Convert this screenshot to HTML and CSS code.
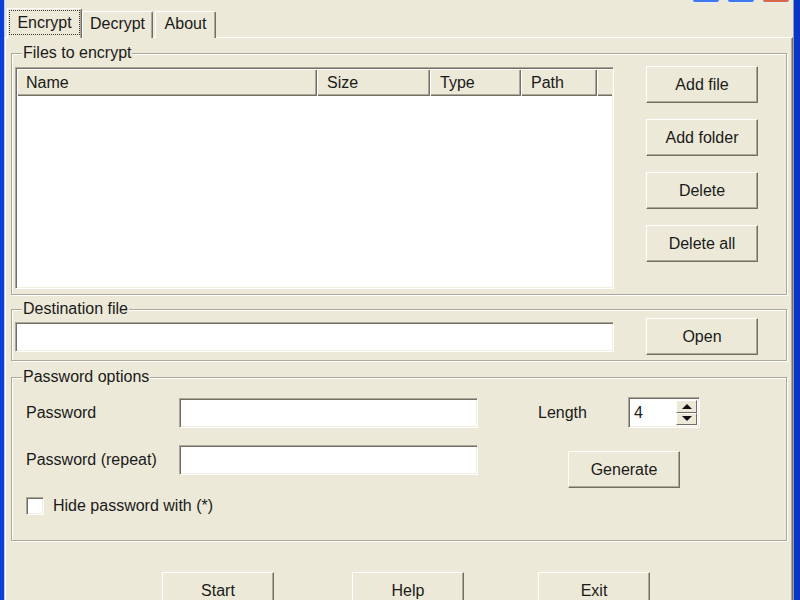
FILE: index.html
```html
<!DOCTYPE html>
<html>
<head>
<meta charset="utf-8">
<link rel="stylesheet" href="styles.css">
</head>
<body>
<div class="window">
  <div class="caption">
    <span class="cb"></span><span class="cb"></span><span class="cb close"></span>
  </div>
  <div class="tabs">
    <div class="tab active"><span>Encrypt</span></div>
    <div class="tab tab-decrypt"><span>Decrypt</span></div>
    <div class="tab tab-about"><span>About</span></div>
  </div>
  <div class="panel">
    <fieldset class="group group-files">
      <legend>Files to encrypt</legend>
      <div class="files-row">
        <div class="listview">
          <div class="lv-header">
            <div class="hcell col-name">Name</div>
            <div class="hcell col-size">Size</div>
            <div class="hcell col-type">Type</div>
            <div class="hcell col-path">Path</div>
            <div class="hcell col-fill"></div>
          </div>
        </div>
        <div class="btncol">
          <button class="btn">Add file</button>
          <button class="btn">Add folder</button>
          <button class="btn">Delete</button>
          <button class="btn">Delete all</button>
        </div>
      </div>
    </fieldset>

    <fieldset class="group group-dest">
      <legend>Destination file</legend>
      <div class="dest-row">
        <div class="input dest-input"></div>
        <button class="btn open-btn">Open</button>
      </div>
    </fieldset>

    <fieldset class="group group-pw">
      <legend>Password options</legend>
      <div class="pw-body">
        <div class="pw-left">
          <div class="field field-first">
            <span class="label">Password</span>
            <div class="input pw-input"></div>
          </div>
          <div class="field field-second">
            <span class="label">Password (repeat)</span>
            <div class="input pw-input"></div>
          </div>
          <div class="check-row">
            <span class="checkbox"></span>
            <span class="check-label">Hide password with (*)</span>
          </div>
        </div>
        <div class="pw-right">
          <div class="length-row">
            <span class="label">Length</span>
            <div class="spinner">
              <span class="spin-value">4</span>
              <div class="spin-btns">
                <span class="spin-up"></span>
                <span class="spin-down"></span>
              </div>
            </div>
          </div>
          <button class="btn generate">Generate</button>
        </div>
      </div>
    </fieldset>

    <div class="bottom-row">
      <button class="btn">Start</button>
      <button class="btn btn-help">Help</button>
      <button class="btn btn-exit">Exit</button>
    </div>
  </div>
</div>
</body>
</html>
```

FILE: styles.css
```css
html, body {
  margin: 0;
  padding: 0;
}
body {
  width: 800px;
  height: 600px;
  overflow: hidden;
  background: #ece9d8;
  font-family: "Liberation Sans", Arial, sans-serif;
  font-size: 16px;
  color: #1a1a1a;
}
.window {
  box-sizing: border-box;
  width: 800px;
  height: 600px;
  overflow: hidden;
  display: flex;
  flex-direction: column;
  background: #ece9d8;
  border-left: 4px solid #0b3fd6;
  border-right: 6px solid #0a36c8;
  box-shadow: inset 1px 0 0 #b9cdf4, inset -1px 0 0 #8f9bb8;
}
.caption {
  height: 3px;
  display: flex;
  justify-content: flex-end;
  gap: 7px;
  padding-right: 4px;
  flex: none;
}
.cb {
  box-sizing: border-box;
  width: 28px;
  height: 3px;
  background: #3f78ee;
  border: 1px solid #e6eefc;
  border-top: none;
  border-radius: 0 0 3px 3px;
}
.cb.close {
  background: #d8674a;
}
.tabs {
  flex: none;
  display: flex;
  align-items: flex-end;
  height: 30px;
  margin-top: 5px;
  padding-left: 3px;
  position: relative;
  z-index: 2;
}
.tab {
  box-sizing: border-box;
  height: 27px;
  display: flex;
  align-items: center;
  justify-content: center;
  border-top: 1px solid #ffffff;
  border-left: 1px solid #ffffff;
  border-right: 1px solid #716f64;
  box-shadow: inset -1px 0 0 #aca899;
  border-radius: 2px 2px 0 0;
  background: #ece9d8;
  padding-bottom: 2px;
}
.tab.active {
  width: 75px;
  height: 30px;
  padding-bottom: 3px;
}
.tab.active span {
  box-sizing: border-box;
  width: 71px;
  height: 25px;
  display: flex;
  align-items: center;
  justify-content: center;
  outline: 1px dotted #333;
  outline-offset: -1px;
  margin-top: 1px;
}
.tab-decrypt {
  width: 71px;
}
.tab-about {
  width: 61px;
  margin-left: 2px;
}
.panel {
  flex: none;
  box-sizing: border-box;
  height: 620px;
  margin: -1px 1px 0 1px;
  border-top: 1px solid #ffffff;
  border-left: 1px solid #ffffff;
  border-right: 1px solid #716f64;
  box-shadow: inset -1px 0 0 #aca899;
  position: relative;
  z-index: 1;
  display: flex;
  flex-direction: column;
}
.group {
  margin: 0 5px;
  padding: 0;
  min-width: 0;
  border: 1px solid #aca899;
  box-shadow: inset 1px 1px 0 #ffffff, 1px 1px 0 #ffffff;
}
.group legend {
  margin-left: 10px;
  padding: 0 1px;
  line-height: 18px;
  background: #ece9d8;
}
.group-files {
  margin-top: 6px;
}
.files-row {
  display: flex;
  align-items: flex-start;
  padding: 0 0 5px 3px;
}
.listview {
  box-sizing: border-box;
  width: 599px;
  height: 222px;
  margin-top: 5px;
  background: #ffffff;
  border-top: 1px solid #aca899;
  border-left: 1px solid #aca899;
  border-right: 1px solid #ffffff;
  border-bottom: 1px solid #ffffff;
  box-shadow: inset 1px 1px 0 #716f64, inset -1px -1px 0 #f1efe2;
  padding: 1px;
}
.lv-header {
  display: flex;
  height: 27px;
}
.hcell {
  box-sizing: border-box;
  height: 27px;
  background: #ece9d8;
  padding-left: 10px;
  display: flex;
  align-items: center;
  box-shadow: inset 1px 1px 0 #ffffff, inset -1px -1px 0 #716f64, inset -2px -2px 0 #aca899;
}
.col-name { width: 300px; padding-left: 9px; }
.col-size { width: 113px; }
.col-type { width: 91px; }
.col-path { width: 76px; }
.col-fill { flex: 1; box-shadow: inset 1px 1px 0 #ffffff, inset 0 -1px 0 #716f64, inset 0 -2px 0 #aca899; }

.btn {
  box-sizing: border-box;
  font-family: inherit;
  font-size: 16px;
  color: #1a1a1a;
  width: 112px;
  height: 37px;
  padding: 0;
  background: #ece9d8;
  border-top: 1px solid #ffffff;
  border-left: 1px solid #ffffff;
  border-right: 1px solid #716f64;
  border-bottom: 1px solid #716f64;
  box-shadow: inset -1px -1px 0 #aca899;
  border-radius: 0;
}
.btncol {
  display: flex;
  flex-direction: column;
  gap: 16px;
  margin-left: 32px;
  margin-top: 4px;
}
.group-dest {
  margin-top: 5px;
}
.dest-row {
  display: flex;
  align-items: flex-start;
  padding: 0 0 5px 3px;
}
.input {
  box-sizing: border-box;
  height: 30px;
  background: #ffffff;
  border-top: 1px solid #aca899;
  border-left: 1px solid #aca899;
  border-right: 1px solid #ffffff;
  border-bottom: 1px solid #ffffff;
  box-shadow: inset 1px 1px 0 #716f64, inset -1px -1px 0 #f1efe2;
}
.dest-input {
  width: 599px;
  margin-top: 4px;
}
.open-btn {
  margin-left: 32px;
}
.group-pw {
  margin-top: 7px;
}
.pw-body {
  display: flex;
  align-items: flex-start;
  padding: 0 0 25px 14px;
}
.pw-left {
  width: 452px;
}
.field {
  display: flex;
  align-items: center;
  height: 30px;
}
.field-first { margin-top: 12px; }
.field-second { margin-top: 17px; }
.field .label {
  width: 153px;
}
.pw-input {
  width: 299px;
}
.check-row {
  display: flex;
  align-items: center;
  margin-top: 22px;
  height: 18px;
}
.checkbox {
  box-sizing: border-box;
  width: 18px;
  height: 18px;
  background: #ffffff;
  border-top: 1px solid #aca899;
  border-left: 1px solid #aca899;
  border-right: 1px solid #ffffff;
  border-bottom: 1px solid #ffffff;
  box-shadow: inset 1px 1px 0 #716f64, inset -1px -1px 0 #f1efe2;
}
.check-label {
  margin-left: 9px;
}
.pw-right {
  margin-left: 60px;
  margin-top: 11px;
}
.length-row {
  display: flex;
  align-items: center;
  height: 31px;
}
.length-row .label {
  width: 90px;
}
.spinner {
  box-sizing: border-box;
  width: 72px;
  height: 31px;
  display: flex;
  align-items: center;
  justify-content: space-between;
  background: #ffffff;
  border-top: 1px solid #aca899;
  border-left: 1px solid #aca899;
  border-right: 1px solid #ffffff;
  border-bottom: 1px solid #ffffff;
  box-shadow: inset 1px 1px 0 #716f64, inset -1px -1px 0 #f1efe2;
  padding: 2px 2px 2px 5px;
}
.spin-value {
  line-height: 18px;
}
.spin-btns {
  width: 21px;
  height: 25px;
  display: flex;
  flex-direction: column;
}
.spin-up, .spin-down {
  box-sizing: border-box;
  flex: 1;
  background: #ece9d8;
  border-top: 1px solid #ffffff;
  border-left: 1px solid #ffffff;
  border-right: 1px solid #716f64;
  border-bottom: 1px solid #716f64;
  display: flex;
  align-items: center;
  justify-content: center;
}
.spin-up::before {
  content: "";
  border-left: 5px solid transparent;
  border-right: 5px solid transparent;
  border-bottom: 5px solid #111;
}
.spin-down::before {
  content: "";
  border-left: 5px solid transparent;
  border-right: 5px solid transparent;
  border-top: 5px solid #111;
}
.generate {
  margin-top: 23px;
  margin-left: 30px;
}
.bottom-row {
  display: flex;
  padding-left: 156px;
  margin-top: 31px;
}
.btn-help {
  margin-left: 78px;
}
.btn-exit {
  margin-left: 74px;
}
```
